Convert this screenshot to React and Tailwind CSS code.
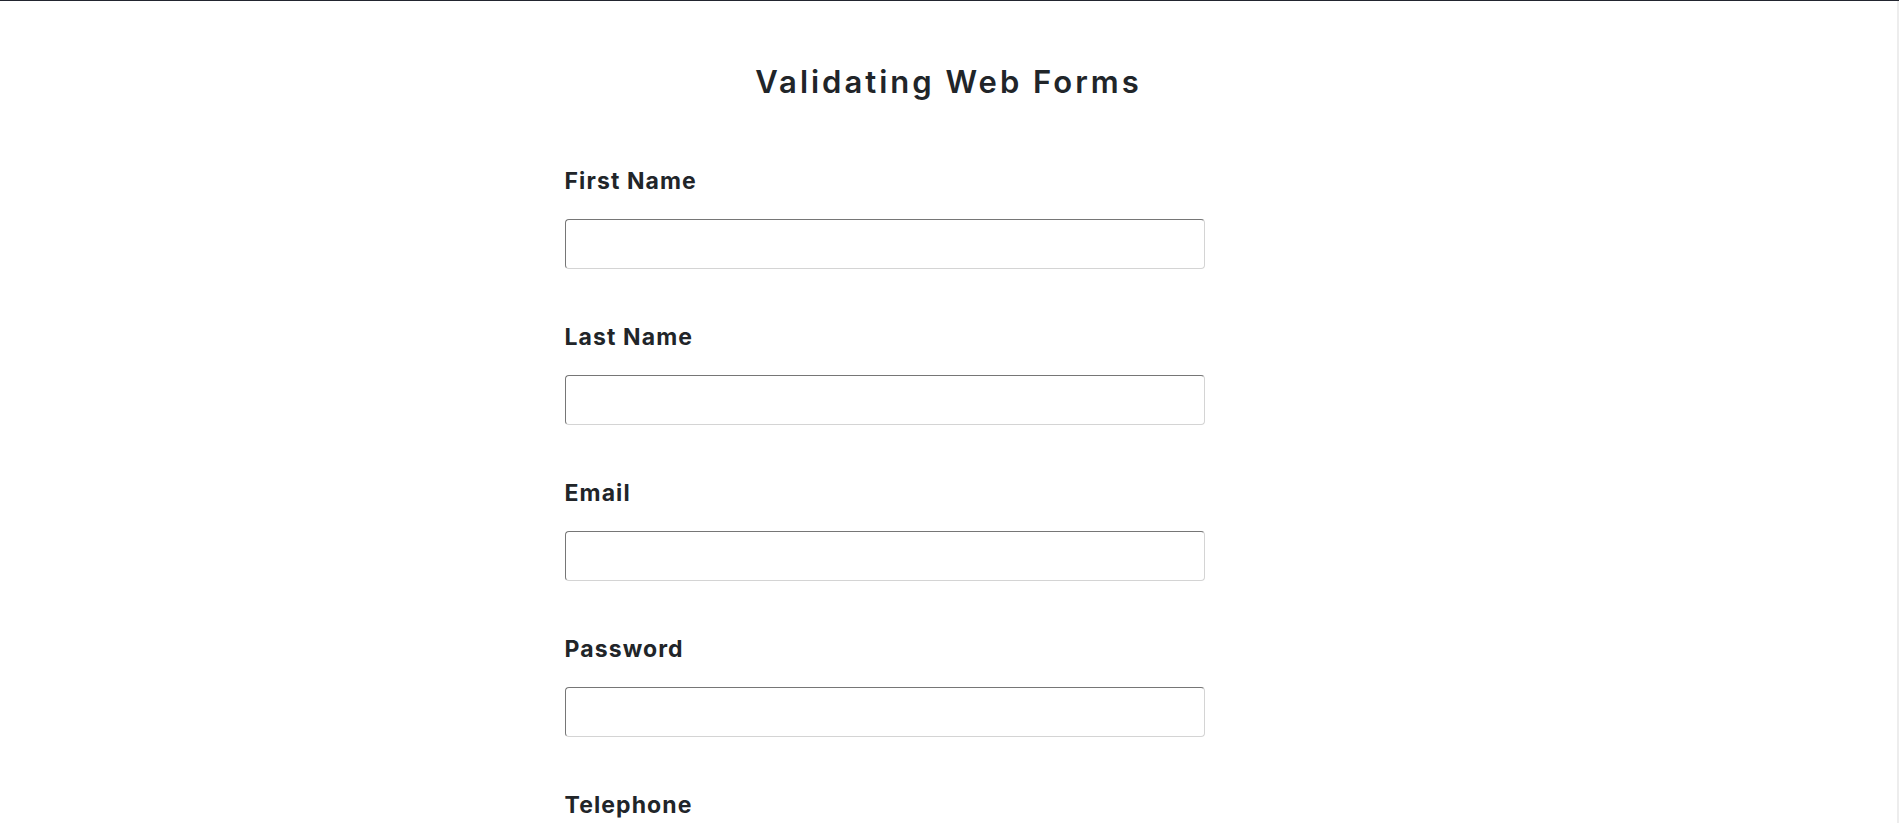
import React from "react";

const fields = [
  { id: "firstName", label: "First Name", type: "text" },
  { id: "lastName", label: "Last Name", type: "text" },
  { id: "email", label: "Email", type: "email" },
  { id: "password", label: "Password", type: "password" },
  { id: "telephone", label: "Telephone", type: "tel" },
];

export default function App() {
  return (
    <div className="flex h-[823px] w-full overflow-hidden border-t border-[#22252f] bg-white font-['Inter',sans-serif] text-[#212529]">
      <main className="flex-1">
        <div className="mx-auto w-[768px] pt-[61px]">
          {/* Title */}
          <h1 className="text-center text-[31px] font-semibold leading-[40px] tracking-[3px]">
            Validating Web Forms
          </h1>

          {/* Form */}
          <form className="mt-[65px] flex flex-col gap-[54px]" onSubmit={(e) => e.preventDefault()}>
            {fields.map((f) => (
              <div key={f.id} className="flex flex-col gap-[24px]">
                <label htmlFor={f.id} className="text-[23px] font-bold leading-[28px] tracking-[1.1px]">
                  {f.label}
                </label>
                <input
                  id={f.id}
                  type={f.type}
                  className="h-[50px] w-[640px] rounded-[4px] border border-t-[#767676] border-l-[#767676] border-b-[#d4d4d4] border-r-[#d4d4d4] bg-white px-3 outline-none"
                />
              </div>
            ))}
          </form>
        </div>
      </main>
      {/* scrollbar strip */}
      <div className="w-[2px] bg-[#ededed]" />
    </div>
  );
}
